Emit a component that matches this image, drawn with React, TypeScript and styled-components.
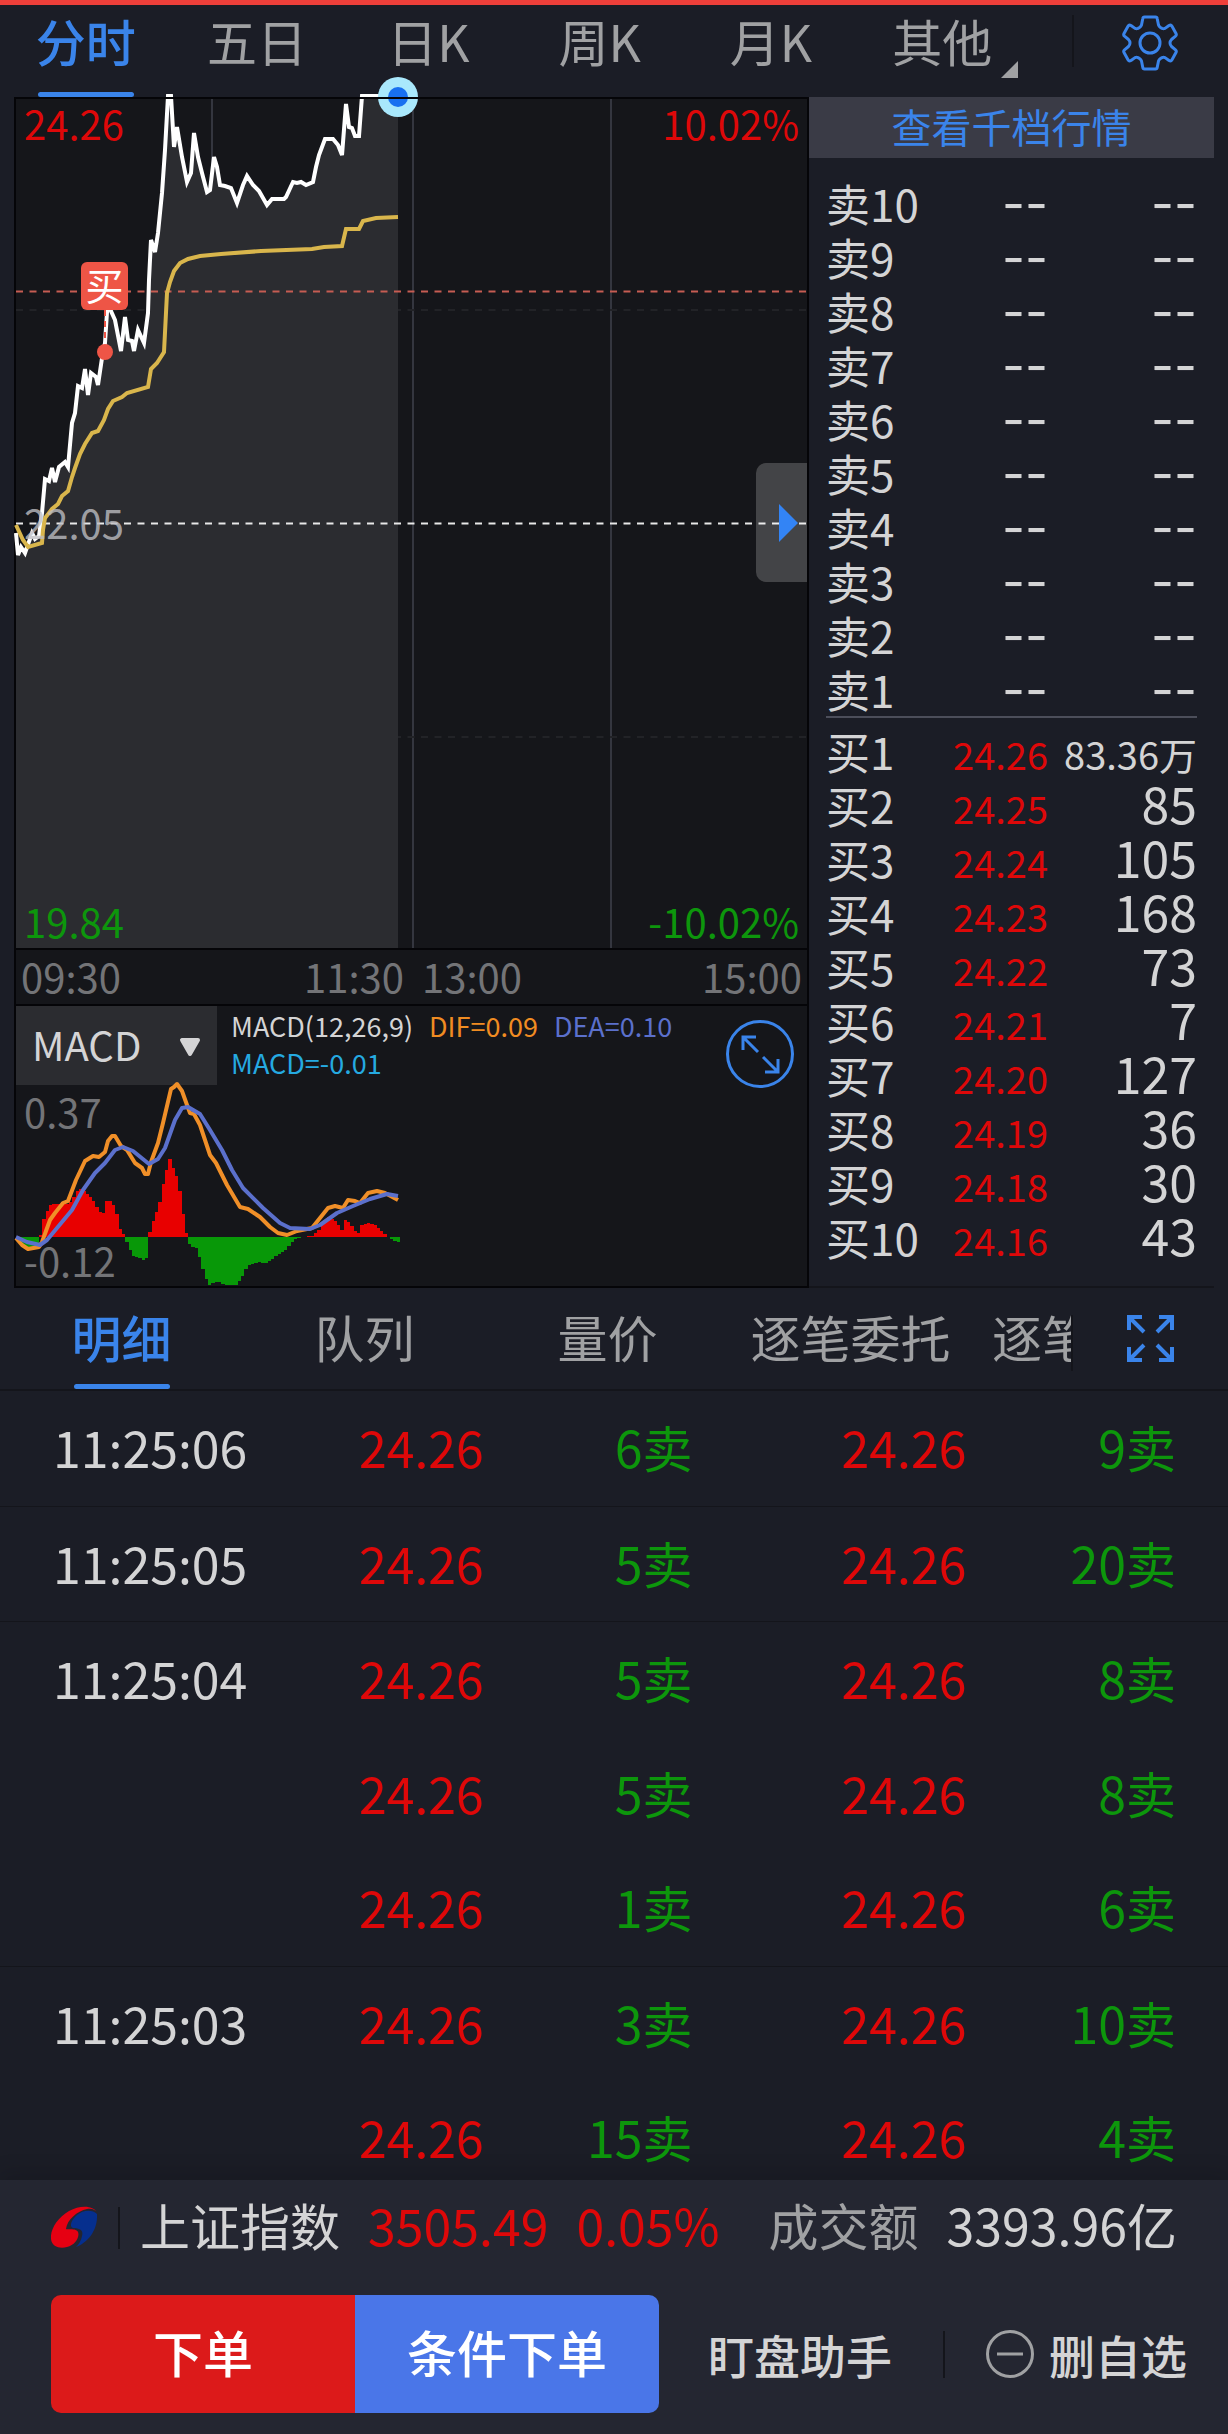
import React from 'react';
import styled, { createGlobalStyle } from 'styled-components';

const c = {
  page: '#1b1d26',
  plot: '#15161a',
  area: '#2b2c30',
  edge: '#050508',
  grid: '#34363f',
  line: '#14151b',
  text: '#d4d4d5',
  muted: '#a0a1a3',
  dim: '#737477',
  blue: '#3a84ea',
  red: '#de0809',
  green: '#0d960c',
  footer: '#242631',
};

const Global = createGlobalStyle`
  * { box-sizing: border-box; }
  html, body { margin: 0; background: ${c.page}; }
  body, button, select {
    font-family: "Noto Sans CJK SC", "Noto Sans", sans-serif;
    color: ${c.text};
  }
  button, select { border: 0; margin: 0; padding: 0; background: none; cursor: pointer; }
  table { border-collapse: collapse; width: 100%; }
  th, td { padding: 0; font-weight: 400; }
  svg { display: block; }
`;

const Page = styled.main`
  height: 100vh;
  display: flex;
  flex-direction: column;
  overflow: hidden;
  border-top: 5px solid #ee3f3a;
`;

/* ---------- period tabs ---------- */
const Nav = styled.nav`
  display: flex;
  height: 92px;
  flex: none;
`;
const PeriodTabs = styled.div`
  flex: 1;
  display: flex;
`;
const Tab = styled.button<{ $active?: boolean; $line: number }>`
  position: relative;
  flex: 1;
  display: flex;
  justify-content: center;
  align-items: flex-start;
  font-size: 50px;
  line-height: ${p => p.$line}px;
  white-space: nowrap;
  color: ${p => (p.$active ? c.blue : c.muted)};
  font-weight: ${p => (p.$active ? 500 : 400)};
  &::after {
    content: '';
    display: ${p => (p.$active ? 'block' : 'none')};
    position: absolute;
    bottom: 0;
    left: calc(50% - 48px);
    width: 96px;
    height: 5px;
    border-radius: 3px;
    background: ${c.blue};
  }
`;
const Corner = styled.svg`
  position: absolute;
  right: 10px;
  top: 56px;
`;
const NavTools = styled.div`
  flex: none;
  width: 200px;
  padding: 10px 50px 0 44px;
  display: flex;
  justify-content: space-between;
  align-items: flex-start;
`;
const Rule = styled.span<{ $h: number }>`
  width: 2px;
  height: ${p => p.$h}px;
  background: ${c.line};
`;
const IconButton = styled.button`
  display: block;
`;

/* ---------- chart and order book ---------- */
const Market = styled.section`
  flex: none;
  display: grid;
  grid-template-columns: minmax(0, 1fr) 405px;
  padding: 0 14px;
`;
const Charts = styled.div`
  background: ${c.plot};
  border: 2px solid ${c.edge};
`;
const Plot = styled.div<{ $h: number }>`
  position: relative;
  height: ${p => p.$h}px;
`;
const Canvas = styled.svg`
  width: 100%;
  height: 100%;
  overflow: visible;
`;
const Corners = styled.div`
  position: absolute;
  inset: 0;
  padding: 1px 8px 4px;
  display: flex;
  flex-direction: column;
  justify-content: space-between;
  pointer-events: none;
`;
const Ends = styled.div`
  display: flex;
  justify-content: space-between;
`;
const Mark = styled.span<{ $color: string }>`
  font-size: 40px;
  line-height: 46px;
  color: ${p => p.$color};
`;
const Badge = styled.span`
  position: absolute;
  left: 65px;
  top: 163px;
  width: 47px;
  height: 48px;
  border-radius: 6px;
  background: #ee5546;
  color: #fff;
  font-size: 38px;
  line-height: 44px;
  text-align: center;
`;
const Handle = styled.button`
  position: absolute;
  right: 0;
  top: 364px;
  width: 51px;
  height: 119px;
  padding-left: 23px;
  border-radius: 10px 0 0 10px;
  background: rgba(255, 255, 255, 0.2);
`;
const Times = styled.div`
  display: flex;
  justify-content: space-between;
  height: 58px;
  padding: 0 5px;
  border: solid ${c.edge};
  border-width: 2px 0;
  font-size: 40px;
  line-height: 52px;
  color: ${c.dim};
`;
const Noon = styled.div`
  display: flex;
  gap: 18px;
  margin-left: 3px;
`;
const MacdBar = styled.div`
  position: absolute;
  inset: 0;
  display: flex;
  align-items: flex-start;
`;
const Picker = styled.label`
  position: relative;
  flex: none;
  width: 201px;
  height: 79px;
  background: ${c.area};
`;
const Select = styled.select`
  appearance: none;
  width: 100%;
  height: 76px;
  padding-left: 16px;
  font-size: 40px;
  outline: 0;
`;
const Caret = styled.svg`
  position: absolute;
  right: 16px;
  top: 32px;
  pointer-events: none;
`;
const Legend = styled.div`
  flex: 1;
  display: flex;
  flex-wrap: wrap;
  column-gap: 16px;
  padding: 1px 0 0 14px;
  font-size: 27px;
  line-height: 37px;
`;
const Series = styled.span<{ $color: string; $full?: boolean }>`
  color: ${p => p.$color};
  flex-basis: ${p => (p.$full ? '100%' : 'auto')};
`;
const Expand = styled(IconButton)`
  flex: none;
  margin: 13px 12px 0 0;
`;
const Scale = styled.div`
  position: absolute;
  left: 8px;
  top: 82px;
  bottom: 3px;
  display: flex;
  flex-direction: column;
  justify-content: space-between;
`;

const Book = styled.aside`
  border-bottom: 2px solid ${c.line};
`;
const DepthButton = styled.button`
  display: block;
  width: 100%;
  height: 61px;
  padding-bottom: 2px;
  background: #3a3b46;
  color: ${c.blue};
  font-size: 40px;
  line-height: 59px;
`;
const BookSide = styled.div<{ $buy?: boolean }>`
  margin: ${p => (p.$buy ? '0 17px' : '18px 17px 0')};
  padding-top: ${p => (p.$buy ? 6 : 0)}px;
  border-top: ${p => (p.$buy ? '2px solid #4c4e5a' : '0')};
  tr { height: 54px; }
  th, td { vertical-align: baseline; line-height: 20px; white-space: nowrap; }
`;
const Level = styled.th`
  text-align: left;
  font-size: 44px;
  width: 100px;
  &::before {
    content: '';
    display: inline-block;
    height: 46px;
  }
`;
const BookCell = styled.td<{ $size: number; $color?: string }>`
  text-align: right;
  font-size: ${p => p.$size}px;
  color: ${p => p.$color || c.text};
  &:last-child { width: 149px; }
`;
const EmptyCell = styled(BookCell)`
  font-family: Inter, sans-serif;
`;

/* ---------- trades ---------- */
const TradeNav = styled.nav`
  flex: none;
  height: 103px;
  display: flex;
  border-bottom: 2px solid ${c.line};
`;
const TradeTabs = styled.div`
  flex: 1;
  min-width: 0;
  display: flex;
  overflow: hidden;
  ${Tab} { flex: 0 0 243px; }
`;
const CutTab = styled(Tab)`
  justify-content: flex-start;
  padding-left: 20px;
`;
const TradeTools = styled.div`
  flex: none;
  width: 157px;
  display: flex;
  justify-content: space-between;
  padding: 27px 54px 0 0;
`;
const TradeList = styled.div`
  flex: 1;
  min-height: 0;
  overflow: hidden;
`;
const TradeTable = styled.table`
  table-layout: fixed;
  font-size: 50px;
  tbody { border-bottom: 1px solid ${c.line}; }
  tr { height: 115px; }
  td, th { padding-bottom: 4px; line-height: 60px; }
`;
const Time = styled.th`
  text-align: left;
  padding-left: 53px;
`;
const Cell = styled.td<{ $color: string; $last?: boolean }>`
  text-align: right;
  color: ${p => p.$color};
  padding-right: ${p => (p.$last ? 52 : 0)}px;
`;

/* ---------- footer ---------- */
const Footer = styled.footer`
  flex: none;
  background: ${c.footer};
  box-shadow: 0 -6px 20px rgba(0, 0, 0, 0.15);
  padding-bottom: 21px;
  position: relative;
`;
const IndexRow = styled.div`
  display: flex;
  align-items: center;
  height: 95px;
  padding: 0 51px;
  font-size: 50px;
  line-height: 88px;
  white-space: nowrap;
  gap: 28px;
`;
const IndexBrand = styled.div`
  display: flex;
  align-items: center;
  gap: 20px;
`;
const IndexText = styled.span<{ $color: string; $push?: boolean }>`
  color: ${p => p.$color};
  height: 95px;
  margin-left: ${p => (p.$push ? 'auto' : '0')};
`;
const Actions = styled.div`
  display: flex;
  align-items: center;
  margin-top: 20px;
  height: 118px;
  padding: 0 41px 0 51px;
`;
const Orders = styled.div`
  flex: 1;
  display: flex;
  height: 100%;
  border-radius: 10px;
  overflow: hidden;
`;
const OrderButton = styled.button<{ $bg: string }>`
  flex: 1;
  background: ${p => p.$bg};
  color: #fff;
  font-size: 50px;
  font-weight: 500;
  padding-bottom: 6px;
`;
const TextButton = styled.button`
  display: flex;
  align-items: center;
  gap: 15px;
  font-size: 46px;
  line-height: 110px;
  font-weight: 500;
  white-space: nowrap;
`;
const Side = styled.div`
  flex: none;
  display: flex;
  align-items: center;
  padding-left: 49px;
`;
const ActionRule = styled(Rule)`
  margin: 0 41px 0 51px;
`;

/* ---------- data ---------- */
const PRICE =
  '16,533 18,555 21,547 25,553 32,533 35,539 39,536 42,513 45,479 49,481 52,468 55,482 59,467 65,462 68,467 72,423 75,413 78,386 82,388 85,369 88,395 91,373 96,377 98,385 102,358 105,343 107,312 108,300 111,311 115,320 121,351 125,317 128,340 132,341 134,351 138,330 144,343 148,313 149,280 151,240 155,252 158,233 162,193 165,150 168,96 171,96 174,147 177,127 182,157 187,182 191,173 194,133 198,157 202,173 207,192 210,190 214,157 217,167 220,185 225,186 231,188 237,203 243,185 247,176 253,185 259,191 267,205 272,199 284,199 286,197 293,182 297,183 301,182 306,185 313,182 316,167 319,155 325,139 333,139 338,145 342,155 346,104 349,127 352,128 355,136 359,136 362,96 398,96';
const AVERAGE =
  '16,525 23,540 28,547 42,543 43,530 45,518 52,509 58,504 62,496 68,491 72,477 75,468 80,454 85,444 92,433 98,431 104,420 108,409 113,401 122,397 127,393 148,387 151,369 157,363 164,352 167,293 170,282 174,271 180,263 188,259 200,256 221,254 261,251 312,249 324,247 342,246 346,229 359,229 363,221 376,218 398,217';
const DIF =
  '16,1238 22,1245 28,1249 39,1247 42,1242 50,1220 55,1213 63,1203 68,1201 76,1180 85,1161 93,1156 99,1157 105,1152 108,1141 112,1136 115,1136 121,1146 127,1150 135,1163 142,1168 145,1174 148,1174 151,1162 158,1143 163,1123 171,1089 174,1087 177,1084 182,1091 187,1105 190,1113 194,1114 200,1125 210,1155 216,1163 227,1185 240,1207 248,1209 260,1217 270,1227 278,1233 287,1235 297,1231 312,1228 320,1218 328,1208 335,1206 343,1208 348,1200 355,1201 360,1203 368,1193 377,1191 385,1193 398,1200';
const DEA =
  '16,1237 27,1242 40,1245 47,1240 57,1228 72,1210 83,1190 95,1173 105,1163 115,1150 123,1147 133,1151 149,1164 158,1159 165,1148 175,1120 182,1108 188,1107 200,1114 210,1130 222,1150 232,1170 243,1188 263,1208 280,1223 290,1228 310,1229 320,1225 337,1213 353,1206 370,1199 387,1194 398,1196';

/* histogram envelope: [x, signed height] */
const HIST: [number, number][] = [
  [16, -1], [20, -5], [24, -9], [32, -11], [38, -10], [40, -2], [41, 5], [44, 18], [50, 32], [55, 33],
  [67, 33], [72, 36], [78, 47], [82, 48], [88, 43], [95, 34], [100, 25], [105, 23], [107, 36], [112, 36],
  [116, 26], [120, 12], [121, 3], [126, 2], [127, -5], [130, -12], [134, -20], [142, -21], [145, -25],
  [148, -17], [149, 0], [150, 5], [155, 20], [160, 35], [165, 60], [168, 73], [171, 81], [174, 66],
  [178, 58], [182, 33], [186, 5], [188, 2], [189, -5], [190, -10], [196, -10], [200, -22], [205, -38],
  [209, -48], [218, -44], [225, -48], [237, -48], [241, -42], [245, -33], [250, -28], [258, -25],
  [266, -26], [275, -20], [285, -14], [292, -5], [297, -1], [303, 0], [313, 1], [320, 8], [328, 20],
  [335, 17], [343, 6], [345, 17], [350, 14], [358, 3], [362, 12], [368, 14], [375, 12], [385, 3],
  [389, 0], [391, -2], [396, -5], [400, -5],
];
const MINUTES = 116;
const STEP = 384 / MINUTES;

function histAt(x: number) {
  const i = HIST.findIndex(p => p[0] >= x);
  if (i <= 0) return HIST[0][1];
  const [x0, y0] = HIST[i - 1];
  const [x1, y1] = HIST[i];
  return y0 + ((y1 - y0) * (x - x0)) / (x1 - x0);
}
const bars = Array.from({ length: MINUTES }, (_, i) => {
  const x = Math.round(16 + i * STEP);
  const next = Math.round(16 + (i + 1) * STEP);
  return { x, w: next - x, h: Math.round(histAt((x + next) / 2)) };
});

const buys: [string, string][] = [
  ['24.26', '83.36万'], ['24.25', '85'], ['24.24', '105'], ['24.23', '168'], ['24.22', '73'],
  ['24.21', '7'], ['24.20', '127'], ['24.19', '36'], ['24.18', '30'], ['24.16', '43'],
];
const trades: { time: string; rows: [string, string][] }[] = [
  { time: '11:25:06', rows: [['6卖', '9卖']] },
  { time: '11:25:05', rows: [['5卖', '20卖']] },
  { time: '11:25:04', rows: [['5卖', '8卖'], ['5卖', '8卖'], ['1卖', '6卖']] },
  { time: '11:25:03', rows: [['3卖', '10卖'], ['15卖', '4卖']] },
];

/* ---------- drawings ---------- */
const Gear = () => (
  <svg width="56" height="56" viewBox="-28 -28 56 56" fill="none" stroke={c.blue} strokeWidth="3" strokeLinejoin="round">
    <path d="M-5.500-26H5.500Q7-26 7.300-24L8.500-18Q9-16.500 10.500-15.500L12-14.600Q13.500-14 15-14.600L19-17.500Q21-18.500 22-16.800L26-9.500Q26.800-8 25.500-6.800L21.500-3.500Q20-2 20 0T21.500 3.500L25.500 6.800Q26.800 8 26 9.500L22 16.800Q21 18.500 19 17.500L15 14.600Q13.500 14 12 14.600L10.500 15.500Q9 16.500 8.500 18L7.300 24Q7 26 5.500 26H-5.500Q-7 26-7.300 24L-8.500 18Q-9 16.500-10.500 15.500L-12 14.600Q-13.500 14-15 14.600L-19 17.500Q-21 18.500-22 16.800L-26 9.500Q-26.800 8-25.500 6.800L-21.500 3.500Q-20 2-20 0T-21.500-3.500L-25.500-6.800Q-26.800-8-26-9.500L-22-16.800Q-21-18.500-19-17.500L-15-14.600Q-13.500-14-12-14.600L-10.500-15.500Q-9-16.500-8.500-18L-7.300-24Q-7-26-5.500-26Z" />
    <circle r="10" />
  </svg>
);

const ExpandCircle = () => (
  <svg width="70" height="70" viewBox="-35 -35 70 70" fill="none" stroke={c.blue} strokeWidth="3">
    <circle r="32.500" />
    <path d="M-2-2L-17-17M-17-4V-17H-4M3 3L18 18M18 5V18H5" />
  </svg>
);

const FullScreen = () => (
  <svg width="47" height="47" viewBox="0 0 47 47" fill="none" stroke={c.blue} strokeWidth="4">
    <path d="M2 15V2H15M2 2L17 17M32 2H45V15M45 2L30 17M2 32V45H15M2 45L17 30M32 45H45V32M45 45L30 30" />
  </svg>
);

const Logo = () => (
  <svg width="47" height="43" viewBox="0 0 47 43">
    <path fill="#e60012" d="M46 7C44 0 30-2 18 5C6 12-1 24 0 33C1 41 9 43 16 41C24 39 29 31 27 26C25 22 17 24 15 23C16 14 26 5 36 3C41 2 45 4 46 7Z" />
    <path fill="#062f8e" d="M46 8C41 3 32 4 26 9C20 14 18 21 22 22C28 22 33 24 31 30C30 35 28 38 25 41C36 37 47 25 46 8Z" />
  </svg>
);

const Minus = () => (
  <svg width="48" height="48" viewBox="-24 -24 48 48" fill="none" stroke={c.muted} strokeWidth="3">
    <circle r="22.500" />
    <path d="M-13 0H13" />
  </svg>
);

function PriceChart() {
  return (
    <Plot $h={849}>
      <Canvas viewBox="16 99 791 849" preserveAspectRatio="none" fill="none">
        <path d="M212 99V948M413 99V948M611 99V948" stroke={c.grid} strokeWidth="2" />
        <path d="M16 310H807M16 737H807" stroke="#222327" strokeWidth="2" strokeDasharray="7 6.500" />
        <polygon points={`${PRICE} 398,948 16,948`} fill={c.area} />
        <path d="M16 291.500H807" stroke="#c65c52" strokeWidth="2" strokeDasharray="7 6.500" />
        <path d="M16 523.500H807" stroke="#e8e8e8" strokeWidth="2" strokeDasharray="7 6.500" />
        <polyline points={PRICE} stroke="#fff" strokeWidth="4" />
        <polyline points={AVERAGE} stroke="#d9b64c" strokeWidth="4" />
        <path d="M105 310V343" stroke="#ee5546" strokeWidth="2" strokeDasharray="6 5" />
        <circle cx="105" cy="352" r="8" fill="#ee5546" />
        <circle cx="398" cy="97" r="20" fill="#a9e8fc" />
        <circle cx="398" cy="97" r="10" fill="#1870f0" />
        <path d="M16 98H807" stroke={c.edge} strokeWidth="2" />
      </Canvas>
      <Corners>
        <Ends>
          <Mark $color={c.red}>24.26</Mark>
          <Mark $color={c.red}>10.02%</Mark>
        </Ends>
        <Mark $color="rgba(190, 190, 195, 0.8)">22.05</Mark>
        <Ends>
          <Mark $color={c.green}>19.84</Mark>
          <Mark $color={c.green}>-10.02%</Mark>
        </Ends>
      </Corners>
      <Badge>买</Badge>
      <Handle aria-label="展开">
        <svg width="20" height="38" viewBox="0 0 20 38"><path d="M0 0L19 19L0 38Z" fill="#3384f5" /></svg>
      </Handle>
    </Plot>
  );
}

function MacdChart() {
  return (
    <Plot $h={280}>
      <MacdBar>
        <Picker>
          <Select aria-label="指标" defaultValue="MACD">
            <option>MACD</option>
          </Select>
          <Caret width="22" height="20" viewBox="0 0 22 20">
            <path d="M3 2H19L11 16Z" fill={c.text} stroke={c.text} strokeWidth="4" strokeLinejoin="round" />
          </Caret>
        </Picker>
        <Legend>
          <Series $color={c.text}>MACD(12,26,9)</Series>
          <Series $color="#f08c22">DIF=0.09</Series>
          <Series $color="#5b70cc">DEA=0.10</Series>
          <Series $color="#25aae1" $full>MACD=-0.01</Series>
        </Legend>
        <Expand aria-label="放大"><ExpandCircle /></Expand>
      </MacdBar>
      <Scale>
        <Mark $color={c.dim}>0.37</Mark>
        <Mark $color={c.dim}>-0.12</Mark>
      </Scale>
      <Plot $h={280}>
        <Canvas viewBox="16 1006 791 280" preserveAspectRatio="none" fill="none" pointerEvents="none">
          {bars.map(b => (
            <rect
              key={b.x}
              x={b.x}
              y={b.h > 0 ? 1237 - b.h : 1237}
              width={b.w}
              height={Math.abs(b.h)}
              fill={b.h > 0 ? '#e80000' : '#089808'}
              shapeRendering="crispEdges"
            />
          ))}
          <polyline points={DIF} stroke="#f08f28" strokeWidth="4" strokeLinejoin="round" />
          <polyline points={DEA} stroke="#5b70cc" strokeWidth="4" strokeLinejoin="round" />
        </Canvas>
      </Plot>
    </Plot>
  );
}

export default function App() {
  return (
    <>
      <Global />
      <Page>
        <Nav>
          <PeriodTabs>
            {['分时', '五日', '日K', '周K', '月K', '其他'].map((t, i) => (
              <Tab key={t} $active={i === 0} $line={70}>
                {t}
                {i === 5 && (
                  <Corner width="17" height="17" viewBox="0 0 17 17"><path d="M17 0V17H0Z" fill={c.muted} /></Corner>
                )}
              </Tab>
            ))}
          </PeriodTabs>
          <NavTools>
            <Rule $h={52} />
            <IconButton aria-label="设置"><Gear /></IconButton>
          </NavTools>
        </Nav>

        <Market>
          <Charts>
            <PriceChart />
            <Times>
              <span>09:30</span>
              <Noon><span>11:30</span><span>13:00</span></Noon>
              <span>15:00</span>
            </Times>
            <MacdChart />
          </Charts>
          <Book>
            <DepthButton>查看千档行情</DepthButton>
            <BookSide>
              <table>
                <tbody>
                  {buys.map((_, i) => (
                    <tr key={i}>
                      <Level scope="row">卖{10 - i}</Level>
                      <EmptyCell $size={50}>--</EmptyCell>
                      <EmptyCell $size={50}>--</EmptyCell>
                    </tr>
                  ))}
                </tbody>
              </table>
            </BookSide>
            <BookSide $buy>
              <table>
                <tbody>
                  {buys.map(([price, qty], i) => (
                    <tr key={i}>
                      <Level scope="row">买{i + 1}</Level>
                      <BookCell $size={38} $color={c.red}>{price}</BookCell>
                      <BookCell $size={qty.endsWith('万') ? 38 : 50}>{qty}</BookCell>
                    </tr>
                  ))}
                </tbody>
              </table>
            </BookSide>
          </Book>
        </Market>

        <TradeNav>
          <TradeTabs>
            <Tab $active $line={96}>明细</Tab>
            <Tab $line={96}>队列</Tab>
            <Tab $line={96}>量价</Tab>
            <Tab $line={96}>逐笔委托</Tab>
            <CutTab $line={96}>逐笔</CutTab>
          </TradeTabs>
          <TradeTools>
            <Rule $h={56} />
            <div><IconButton aria-label="全屏"><FullScreen /></IconButton></div>
          </TradeTools>
        </TradeNav>

        <TradeList>
          <TradeTable>
            <colgroup>
              <col width="25%" />
              <col width="14.4%" />
              <col width="17%" />
              <col width="22.3%" />
              <col width="21.3%" />
            </colgroup>
            {trades.map(g => (
              <tbody key={g.time}>
                {g.rows.map(([a, b], i) => (
                  <tr key={i}>
                    <Time scope="row">{i === 0 ? g.time : ''}</Time>
                    <Cell $color={c.red}>24.26</Cell>
                    <Cell $color={c.green}>{a}</Cell>
                    <Cell $color={c.red}>24.26</Cell>
                    <Cell $color={c.green} $last>{b}</Cell>
                  </tr>
                ))}
              </tbody>
            ))}
          </TradeTable>
        </TradeList>

        <Footer>
          <IndexRow>
            <IndexBrand>
              <Logo />
              <Rule $h={42} />
              <IndexText $color={c.text}>上证指数</IndexText>
            </IndexBrand>
            <IndexText $color={c.red}>3505.49</IndexText>
            <IndexText $color={c.red}>0.05%</IndexText>
            <IndexText $color={c.muted} $push>成交额</IndexText>
            <IndexText $color={c.text}>3393.96亿</IndexText>
          </IndexRow>
          <Actions>
            <Orders>
              <OrderButton $bg="#dc1a1a">下单</OrderButton>
              <OrderButton $bg="#4a76e8">条件下单</OrderButton>
            </Orders>
            <Side>
              <TextButton>盯盘助手</TextButton>
              <ActionRule $h={47} />
              <TextButton><Minus />删自选</TextButton>
            </Side>
          </Actions>
        </Footer>
      </Page>
    </>
  );
}
